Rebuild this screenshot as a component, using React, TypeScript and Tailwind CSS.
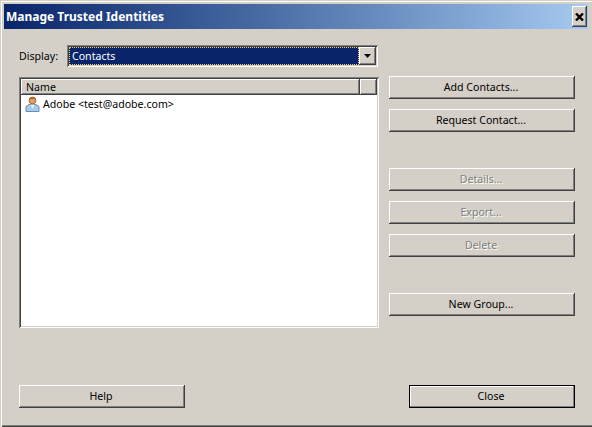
const raised =
  'shadow-[inset_-1px_-1px_0_#404040,inset_1px_1px_0_#ffffff,inset_-2px_-2px_0_#808080]';
const sunken =
  'shadow-[inset_1px_1px_0_#808080,inset_-1px_-1px_0_#ffffff,inset_2px_2px_0_#404040,inset_-2px_-2px_0_#d4d0c8]';

function Button({
  label,
  disabled,
  isDefault,
  className = '',
}: {
  label: string;
  disabled?: boolean;
  isDefault?: boolean;
  className?: string;
}) {
  if (isDefault) {
    return (
      <div className={`h-[23px] w-[166px] border border-black ${className}`}>
        <div className="flex h-full items-center justify-center pr-[2px] text-[10.6px] text-black shadow-[inset_-1px_-1px_0_#808080,inset_1px_1px_0_#ffffff]">
          {label}
        </div>
      </div>
    );
  }
  return (
    <div
      className={`flex h-[23px] items-center justify-center pr-[2px] text-[10.6px] ${raised} ${
        disabled ? 'text-[#808080] [text-shadow:1px_1px_0_#ffffff]' : 'text-black'
      } ${className}`}
    >
      {label}
    </div>
  );
}

function PersonIcon() {
  return (
    <svg width="15" height="16" viewBox="0 0 15 16" className="shrink-0">
      <path d="M1 15.5V10.5L4 8.5H11L14 10.5V15.5Z" fill="#a9cbe8" stroke="#5f8fb8" strokeWidth="1" />
      <path d="M5.5 8.5L7.5 13L9.5 8.5Z" fill="#e8f2fa" />
      <circle cx="7.5" cy="4.5" r="3.4" fill="#e0a060" stroke="#b0622a" strokeWidth="1" />
      <path d="M4.5 3.5C5 1 10 1 10.5 3.5C9 2.5 6 2.5 4.5 3.5Z" fill="#8a5a30" />
    </svg>
  );
}

export default function App() {
  return (
    <div className="flex h-[427px] w-[592px] flex-col bg-[#d4d0c8] px-1 pt-1 pb-[3px] font-['Noto_Sans',sans-serif] shadow-[inset_0_1px_0_#d4d0c8,inset_1px_0_0_#d4d0c8,inset_0_2px_0_#ffffff,inset_2px_0_0_#ffffff,inset_0_-1px_0_#404040,inset_0_-2px_0_#808080]">
      {/* title bar */}
      <div className="flex h-[25px] shrink-0 items-center justify-between bg-gradient-to-r from-[#0a246a] to-[#a6caf0] pr-px pl-0.5">
        <span className="text-[12px] font-bold text-white">Manage Trusted Identities</span>
        <div className={`flex h-[21px] w-[15px] items-center justify-center bg-[#d4d0c8] ${raised}`}>
          <svg width="9" height="8" viewBox="0 0 9 8">
            <path d="M1 0.5L8 7.5M8 0.5L1 7.5" stroke="black" strokeWidth="2.4" />
          </svg>
        </div>
      </div>

      <div className="flex flex-1 flex-col pt-4 pr-[13px] pl-[15px]">
        {/* display row */}
        <div className="flex items-center">
          <span className="w-[48px] pt-px text-[10.6px] text-black">Display:</span>
          <div className={`flex h-[22px] w-[311px] items-center justify-between bg-white p-[2px] ${sunken}`}>
            <div className="flex h-full flex-1 items-center border border-dotted border-[#f0d060] bg-[#0a246a] pt-px pl-[2px] text-[10.6px] text-white">
              Contacts
            </div>
            <div className={`flex h-full w-[17px] items-center justify-center bg-[#d4d0c8] ${raised}`}>
              <svg width="7" height="4" viewBox="0 0 7 4">
                <path d="M0 0H7L3.5 4Z" fill="black" />
              </svg>
            </div>
          </div>
        </div>

        <div className="mt-[9px] flex gap-[10px]">
          {/* list */}
          <div className={`mt-px flex h-[251px] w-[360px] flex-col bg-white p-[2px] ${sunken}`}>
            <div className="flex h-[16px] shrink-0 bg-[#d4d0c8] text-[10.6px] text-black">
              <div className={`flex flex-1 items-center pt-px pl-[5px] ${raised}`}>Name</div>
              <div className={`w-[17px] ${raised}`} />
            </div>
            <div className="flex items-center gap-[3px] pt-[1px] pl-[4px] text-[10.6px] text-black">
              <PersonIcon />
              <span className="pt-px">Adobe &lt;test@adobe.com&gt;</span>
            </div>
          </div>

          {/* buttons */}
          <div className="flex w-[186px] flex-col">
            <Button label="Add Contacts..." />
            <Button label="Request Contact..." className="mt-[10px]" />
            <Button label="Details..." disabled className="mt-[36px]" />
            <Button label="Export..." disabled className="mt-[10px]" />
            <Button label="Delete" disabled className="mt-[10px]" />
            <Button label="New Group..." className="mt-[36px]" />
          </div>
        </div>

        {/* footer */}
        <div className="mt-auto mb-[16px] flex justify-between">
          <Button label="Help" className="w-[166px]" />
          <Button label="Close" isDefault />
        </div>
      </div>
    </div>
  );
}
